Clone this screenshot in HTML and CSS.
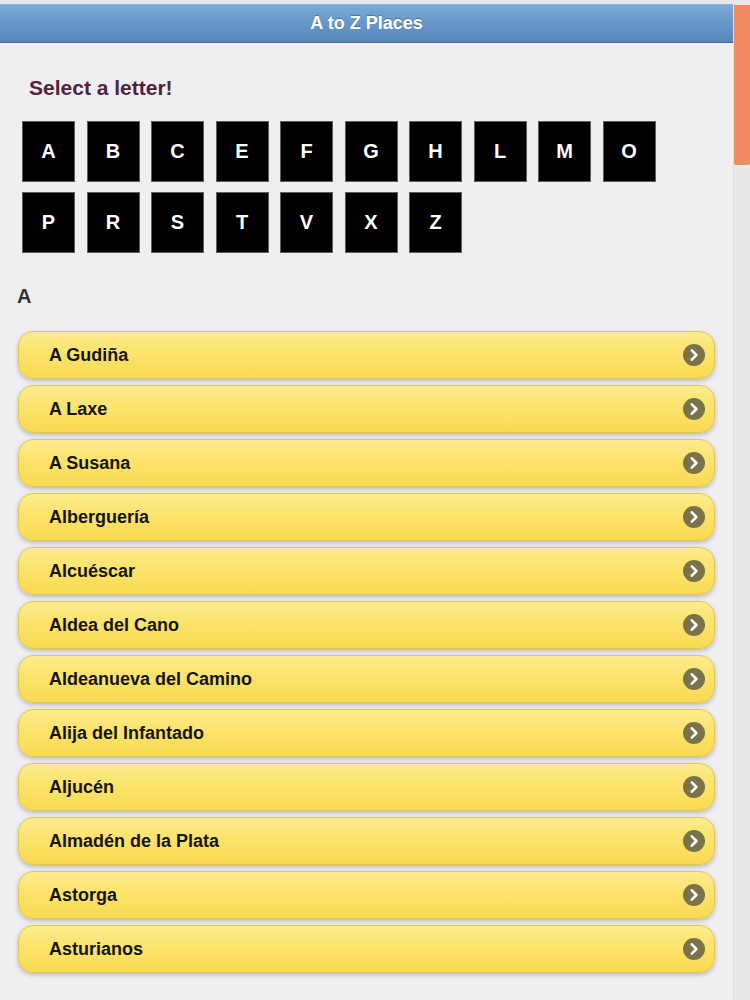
FILE: index.html
```html
<!DOCTYPE html>
<html lang="es">
<head>
<meta charset="utf-8">
<title>A to Z Places</title>
<link rel="stylesheet" href="styles.css">
</head>
<body>
<div class="screen">
  <div class="page">
    <header class="header"><h1 class="title">A to Z Places</h1></header>
    <h2 class="prompt">Select a letter!</h2>
    <div class="letters">
      <a class="letter">A</a><a class="letter">B</a><a class="letter">C</a><a class="letter">E</a><a class="letter">F</a><a class="letter">G</a><a class="letter">H</a><a class="letter">L</a><a class="letter">M</a><a class="letter">O</a>
      <a class="letter">P</a><a class="letter">R</a><a class="letter">S</a><a class="letter">T</a><a class="letter">V</a><a class="letter">X</a><a class="letter">Z</a>
    </div>
    <h3 class="section">A</h3>
    <ul class="places">
      <li class="place"><span>A Gudiña</span><svg class="arrow" viewBox="0 0 22 22"><circle cx="11" cy="11" r="11"/><path d="M8.8 6.3 L13.4 11 L8.8 15.7"/></svg></li>
      <li class="place"><span>A Laxe</span><svg class="arrow" viewBox="0 0 22 22"><circle cx="11" cy="11" r="11"/><path d="M8.8 6.3 L13.4 11 L8.8 15.7"/></svg></li>
      <li class="place"><span>A Susana</span><svg class="arrow" viewBox="0 0 22 22"><circle cx="11" cy="11" r="11"/><path d="M8.8 6.3 L13.4 11 L8.8 15.7"/></svg></li>
      <li class="place"><span>Alberguería</span><svg class="arrow" viewBox="0 0 22 22"><circle cx="11" cy="11" r="11"/><path d="M8.8 6.3 L13.4 11 L8.8 15.7"/></svg></li>
      <li class="place"><span>Alcuéscar</span><svg class="arrow" viewBox="0 0 22 22"><circle cx="11" cy="11" r="11"/><path d="M8.8 6.3 L13.4 11 L8.8 15.7"/></svg></li>
      <li class="place"><span>Aldea del Cano</span><svg class="arrow" viewBox="0 0 22 22"><circle cx="11" cy="11" r="11"/><path d="M8.8 6.3 L13.4 11 L8.8 15.7"/></svg></li>
      <li class="place"><span>Aldeanueva del Camino</span><svg class="arrow" viewBox="0 0 22 22"><circle cx="11" cy="11" r="11"/><path d="M8.8 6.3 L13.4 11 L8.8 15.7"/></svg></li>
      <li class="place"><span>Alija del Infantado</span><svg class="arrow" viewBox="0 0 22 22"><circle cx="11" cy="11" r="11"/><path d="M8.8 6.3 L13.4 11 L8.8 15.7"/></svg></li>
      <li class="place"><span>Aljucén</span><svg class="arrow" viewBox="0 0 22 22"><circle cx="11" cy="11" r="11"/><path d="M8.8 6.3 L13.4 11 L8.8 15.7"/></svg></li>
      <li class="place"><span>Almadén de la Plata</span><svg class="arrow" viewBox="0 0 22 22"><circle cx="11" cy="11" r="11"/><path d="M8.8 6.3 L13.4 11 L8.8 15.7"/></svg></li>
      <li class="place"><span>Astorga</span><svg class="arrow" viewBox="0 0 22 22"><circle cx="11" cy="11" r="11"/><path d="M8.8 6.3 L13.4 11 L8.8 15.7"/></svg></li>
      <li class="place"><span>Asturianos</span><svg class="arrow" viewBox="0 0 22 22"><circle cx="11" cy="11" r="11"/><path d="M8.8 6.3 L13.4 11 L8.8 15.7"/></svg></li>
    </ul>
  </div>
  <div class="scrollbar"><div class="thumb"></div></div>
</div>
</body>
</html>
```
FILE: styles.css
```css
html, body {
  margin: 0;
  padding: 0;
  height: 1000px;
  overflow: hidden;
  background: #efeff1;
  font-family: "Liberation Sans", Arial, sans-serif;
}

.screen {
  display: flex;
  height: 1000px;
}

.page {
  flex: 1;
  padding-top: 4px;
  background: #efeff1;
  box-shadow: inset 0 4px 0 #e6e8ec;
}

.header {
  box-sizing: border-box;
  height: 39px;
  background: linear-gradient(#7eaad4, #6495c6 55%, #5888b9);
  border-top: 1px solid #8fb4d9;
  border-bottom: 1px solid #44698f;
}

.title {
  margin: 0;
  text-align: center;
  color: #fff;
  font-size: 18px;
  font-weight: bold;
  line-height: 37px;
  text-shadow: 0 -1px 0 rgba(40, 70, 110, 0.5);
}

.prompt {
  margin: 33px 0 0;
  padding-left: 29px;
  font-size: 21px;
  line-height: 24px;
  font-weight: bold;
  color: #52233a;
}

.letters {
  display: flex;
  flex-wrap: wrap;
  column-gap: 11.5px;
  row-gap: 10px;
  max-width: 640px;
  margin: 21px 0 0 22px;
}

.letter {
  box-sizing: border-box;
  width: 53px;
  height: 61px;
  background: #000;
  border: 1px solid #5e5e5e;
  color: #fff;
  font-size: 20px;
  font-weight: bold;
  display: flex;
  align-items: center;
  justify-content: center;
}

.section {
  margin: 31px 0 0;
  padding-left: 17px;
  font-size: 20px;
  line-height: 24px;
  font-weight: bold;
  color: #333;
}

.places {
  list-style: none;
  margin: 23px 18px 0;
  padding: 0;
  display: flex;
  flex-direction: column;
  gap: 6px;
}

.place {
  box-sizing: border-box;
  height: 48px;
  border: 1px solid #e6c450;
  border-radius: 15px;
  background: linear-gradient(#fdec8e, #fce36c 45%, #f9da52);
  box-shadow: 0 2px 4px rgba(0, 0, 0, 0.22);
  padding: 0 9px 0 30px;
  display: flex;
  align-items: center;
  justify-content: space-between;
  font-size: 18px;
  font-weight: bold;
  color: #141414;
}

.arrow {
  width: 22px;
  height: 22px;
}

.arrow circle {
  fill: #7b7249;
}

.arrow path {
  fill: none;
  stroke: #fff;
  stroke-width: 2.6;
  stroke-linecap: round;
  stroke-linejoin: round;
}

.scrollbar {
  width: 17px;
  background: #e8e8ea;
  border-left: 1px solid #e0e0e2;
  box-sizing: border-box;
}

.thumb {
  margin-top: 5px;
  height: 160px;
  background: #ef8c60;
  border-radius: 0 0 2px 2px;
}
```
